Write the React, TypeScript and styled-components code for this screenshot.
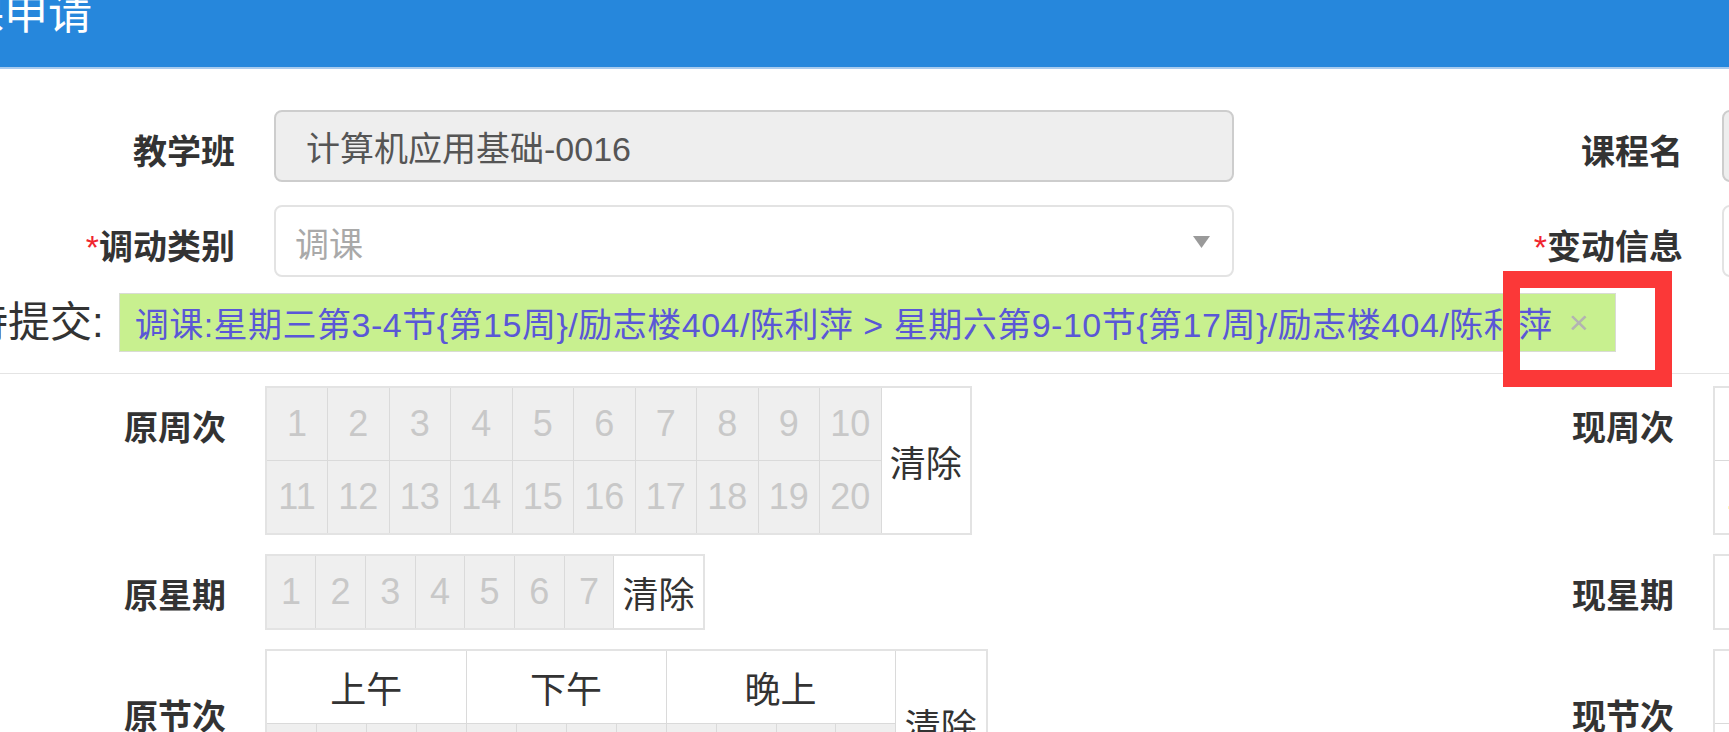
import React from "react";
import styled, { createGlobalStyle } from "styled-components";

const GlobalStyle = createGlobalStyle`
  html, body {
    margin: 0;
    padding: 0;
    background: #fff;
  }
  body {
    font-family: "Liberation Sans", "Noto Sans CJK SC", sans-serif;
    color: #333;
    overflow: hidden;
  }
`;

const range = (from: number, to: number) =>
  Array.from({ length: to - from + 1 }, (_, i) => from + i);

const PENDING =
  "调课:星期三第3-4节{第15周}/励志楼404/陈利萍 > 星期六第9-10节{第17周}/励志楼404/陈利萍";

// 节次 widths: 1-9 narrow, 10-12 wider (two digits)
const periodWidths = [50, 50, 50, 50, 50, 50, 50, 50, 50, 60, 59, 60];

type GridProps = { $off?: boolean };

const WeekTable = ({ off }: { off: boolean }) => (
  <S.Table>
    <colgroup>
      {range(1, 10).map((n) => (
        <S.Col key={n} $w={61.5} />
      ))}
      <S.Col $w={90} />
    </colgroup>
    <tbody>
      <tr>
        {range(1, 10).map((n) => (
          <S.Cell key={n} $off={off}>
            {n}
          </S.Cell>
        ))}
        <S.ClearCell rowSpan={2}>清除</S.ClearCell>
      </tr>
      <tr>
        {range(11, 20).map((n) => (
          <S.Cell key={n} $off={off}>
            {n}
          </S.Cell>
        ))}
      </tr>
    </tbody>
  </S.Table>
);

const DayTable = ({ off }: { off: boolean }) => (
  <S.Table>
    <colgroup>
      {range(1, 7).map((n) => (
        <S.Col key={n} $w={49.7} />
      ))}
      <S.Col $w={90} />
    </colgroup>
    <tbody>
      <tr>
        {range(1, 7).map((n) => (
          <S.Cell key={n} $off={off}>
            {n}
          </S.Cell>
        ))}
        <S.ClearCell>清除</S.ClearCell>
      </tr>
    </tbody>
  </S.Table>
);

const PeriodTable = ({ off }: { off: boolean }) => (
  <S.Table>
    <colgroup>
      {periodWidths.map((w, i) => (
        <S.Col key={i} $w={w} />
      ))}
      <S.Col $w={92} />
    </colgroup>
    <tbody>
      <tr>
        <S.HeadCell colSpan={4}>上午</S.HeadCell>
        <S.HeadCell colSpan={4}>下午</S.HeadCell>
        <S.HeadCell colSpan={4}>晚上</S.HeadCell>
        <S.ClearCell rowSpan={2}>清除</S.ClearCell>
      </tr>
      <tr>
        {range(1, 12).map((n) => (
          <S.Cell key={n} $off={off}>
            {n}
          </S.Cell>
        ))}
      </tr>
    </tbody>
  </S.Table>
);

const App = () => {
  return (
    <S.Page>
      <GlobalStyle />
      <S.Header>
        <S.Title>调课申请</S.Title>
      </S.Header>

      <S.Form $shift={-214}>
        <S.Row $gap={41}>
          <S.Group>
            <S.Label $pad={22}>教学班</S.Label>
            <S.Input readOnly value="计算机应用基础-0016" />
          </S.Group>
          <S.Group>
            <S.Label $pad={22}>课程名</S.Label>
            <S.Input readOnly value="计算机应用基础" />
          </S.Group>
        </S.Row>
        <S.Row $gap={23}>
          <S.Group>
            <S.Label $pad={22}>
              <S.Star>*</S.Star>调动类别
            </S.Label>
            <S.Select>
              <S.Placeholder>调课</S.Placeholder>
              <svg width="17" height="12" viewBox="0 0 17 12">
                <polygon points="0,0 17,0 8.5,12" fill="#9a9a9a" />
              </svg>
            </S.Select>
          </S.Group>
          <S.Group>
            <S.Label $pad={22}>
              <S.Star>*</S.Star>变动信息
            </S.Label>
            <S.Select>
              <S.Placeholder />
            </S.Select>
          </S.Group>
        </S.Row>
      </S.Form>

      <S.PendingRow>
        <S.PendingLabel>待提交:</S.PendingLabel>
        <S.PendingTag>
          {PENDING}
          <S.Close>×</S.Close>
        </S.PendingTag>
      </S.PendingRow>

      <S.Divider />

      <S.Form $shift={-223}>
        <S.Row $gap={12}>
          <S.Group>
            <S.Label $pad={22}>原周次</S.Label>
            <WeekTable off />
          </S.Group>
          <S.Group>
            <S.Label $pad={22}>现周次</S.Label>
            <WeekTable off={false} />
          </S.Group>
        </S.Row>
        <S.Row $gap={19}>
          <S.Group>
            <S.Label $pad={22}>原星期</S.Label>
            <DayTable off />
          </S.Group>
          <S.Group>
            <S.Label $pad={22}>现星期</S.Label>
            <DayTable off={false} />
          </S.Group>
        </S.Row>
        <S.Row $gap={19}>
          <S.Group>
            <S.Label $pad={48}>原节次</S.Label>
            <PeriodTable off />
          </S.Group>
          <S.Group>
            <S.Label $pad={48}>现节次</S.Label>
            <PeriodTable off={false} />
          </S.Group>
        </S.Row>
      </S.Form>

      {/* 截图标注框 */}
      <S.Marker />
    </S.Page>
  );
};

const S = {
  Page: styled.div`
    position: relative;
    width: 1729px;
    height: 732px;
    overflow: hidden;
    background: #fff;
  `,
  Header: styled.header`
    height: 67px;
    background: #2687dc;
    border-bottom: 2px solid #a9cbee;
    overflow: hidden;
  `,
  Title: styled.h1`
    margin: -8px 0 0 -84px;
    font-size: 44px;
    line-height: 44px;
    font-weight: normal;
    color: #fff;
    white-space: nowrap;
  `,
  Form: styled.div<{ $shift: number }>`
    margin-left: ${({ $shift }) => $shift}px;
    width: 3200px;
  `,
  Row: styled.div<{ $gap: number }>`
    display: flex;
    margin-top: ${({ $gap }) => $gap}px;
  `,
  Group: styled.div`
    display: flex;
    align-items: flex-start;
    flex: none;
    width: 1448px;
  `,
  Label: styled.label<{ $pad: number }>`
    flex: none;
    box-sizing: border-box;
    width: 488px;
    padding: ${({ $pad }) => $pad}px 39px 0 0;
    text-align: right;
    font-size: 34px;
    line-height: 40px;
    font-weight: bold;
    color: #333;
    white-space: nowrap;
  `,
  Star: styled.span`
    color: #f0252f;
    font-weight: normal;
  `,
  Input: styled.input`
    flex: none;
    box-sizing: border-box;
    width: 960px;
    height: 72px;
    padding: 0 30px;
    border: 2px solid #cdcdcd;
    border-radius: 8px;
    background: #eee;
    font-family: inherit;
    font-size: 34px;
    color: #555;
    outline: none;
  `,
  Select: styled.div`
    flex: none;
    display: flex;
    align-items: center;
    justify-content: space-between;
    box-sizing: border-box;
    width: 960px;
    height: 72px;
    padding: 2px 22px 0 19px;
    border: 2px solid #e3e3e3;
    border-radius: 8px;
    background: #fff;
  `,
  Placeholder: styled.span`
    font-size: 34px;
    color: #a9a9a9;
  `,
  PendingRow: styled.div`
    display: flex;
    align-items: center;
    margin: 16px 0 0 -34px;
  `,
  PendingLabel: styled.span`
    flex: none;
    font-size: 42px;
    line-height: 50px;
    color: #333;
    white-space: nowrap;
  `,
  PendingTag: styled.div`
    flex: none;
    display: flex;
    align-items: center;
    box-sizing: border-box;
    height: 59px;
    margin-left: 15px;
    padding: 0 26px 0 15px;
    border: 1px solid #d9dcd4;
    background: #c8f08f;
    font-size: 34px;
    letter-spacing: 0.5px;
    color: #5a57d6;
    white-space: nowrap;
  `,
  Close: styled.span`
    margin-left: 16px;
    font-size: 34px;
    color: #b3b3b3;
  `,
  Divider: styled.div`
    height: 1px;
    margin-top: 21px;
    background: #e4e4e4;
  `,
  Table: styled.table`
    flex: none;
    border-collapse: collapse;
    table-layout: fixed;
    border: 2px solid #e3e3e3;
  `,
  Col: styled.col<{ $w: number }>`
    width: ${({ $w }) => $w}px;
  `,
  Cell: styled.td<GridProps>`
    height: 72px;
    padding: 0;
    border: 1px solid #dadada;
    background: ${({ $off }) => ($off ? "#efefef" : "#fff")};
    color: ${({ $off }) => ($off ? "#c8c8c8" : "#f2b447")};
    text-align: center;
    font-size: 36px;
  `,
  HeadCell: styled.td`
    height: 72px;
    padding: 0;
    border: 1px solid #dadada;
    background: #fff;
    text-align: center;
    font-size: 36px;
    color: #333;
  `,
  ClearCell: styled.td`
    padding: 0;
    border: 1px solid #dadada;
    background: #fff;
    text-align: center;
    font-size: 36px;
    color: #333;
    white-space: nowrap;
  `,
  Marker: styled.div`
    position: absolute;
    left: 1503px;
    top: 271px;
    box-sizing: border-box;
    width: 169px;
    height: 116px;
    border: 17px solid #fb3838;
  `,
};

export default App;
